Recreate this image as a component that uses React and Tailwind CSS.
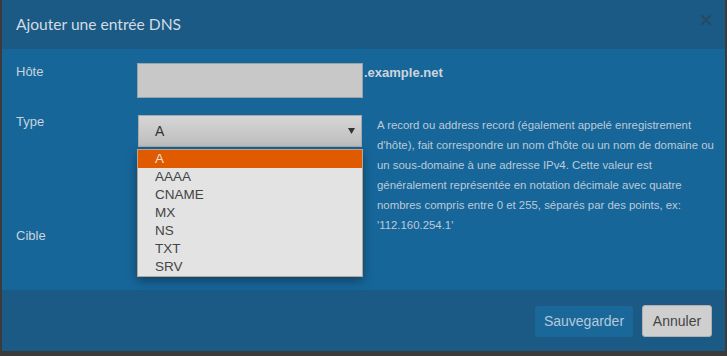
export default function App() {
  const items = ["A", "AAAA", "CNAME", "MX", "NS", "TXT", "SRV"];
  return (
    <div className="w-[727px] h-[356px] bg-[#3b3b3b] pl-[2px] overflow-hidden" style={{ fontFamily: '"Liberation Sans", Arial, sans-serif' }}>
      <div className="w-[723px] h-[351px] flex flex-col">
        {/* Header */}
        <div className="h-[49px] bg-[#1a5a84] flex items-center justify-between pl-[14px] pr-[14px] shrink-0">
          <div className="text-[15.6px] text-[#d2dae2] font-['Lato',sans-serif] pt-[1px]">Ajouter une entrée DNS</div>
          <svg width="10" height="10" viewBox="0 0 10 10" className="mb-[9px]">
            <path d="M1 1 L9 9 M9 1 L1 9" stroke="#2b4862" strokeWidth="2" strokeLinecap="round" />
          </svg>
        </div>
        {/* Body */}
        <div className="h-[241px] bg-[#17669a] relative pt-[14px] pl-[14px] shrink-0">
          {/* Row 1 */}
          <div className="flex items-start">
            <div className="w-[121px] text-[13px] leading-[18px] text-[#c9d3dc]">Hôte</div>
            <div className="w-[226px] h-[35px] bg-[#c8c8c8] border border-[#9aa3a8]" />
            <div className="text-[13px] leading-[18px] font-bold text-[#ccd5dd] ml-[1px] pt-[1px]">.example.net</div>
          </div>
          {/* Row 2 */}
          <div className="flex items-start mt-[17px] h-[104px]">
            <div className="w-[121px] text-[13px] leading-[18px] text-[#c9d3dc] -mt-[2px]">Type</div>
            <div className="w-[224px] h-[32px] ml-[1px] border border-[#a9a9a9] bg-gradient-to-b from-[#d6d6d6] to-[#bdbdbd] flex items-center justify-between pl-[16px] pr-[6px]">
              <span className="text-[14px] text-[#333]">A</span>
              <svg width="7" height="6" viewBox="0 0 7 6"><path d="M0 0 L7 0 L3.5 6 Z" fill="#333" /></svg>
            </div>
            <div className="ml-[15px] w-[340px] text-[11.4px] leading-[20px] text-[#bccad6]">
              A record ou address record (également appelé enregistrement d'hôte), fait correspondre un nom d'hôte ou un nom de domaine ou un sous-domaine à une adresse IPv4. Cette valeur est généralement représentée en notation décimale avec quatre nombres compris entre 0 et 255, séparés par des points, ex: '112.160.254.1'
            </div>
          </div>
          {/* Row 3 */}
          <div className="flex items-center h-[34px]">
            <div className="w-[121px] text-[13px] leading-[18px] text-[#c9d3dc]">Cible</div>
            <div className="w-[226px] h-[34px]" />
          </div>
          {/* Dropdown */}
          <div className="absolute left-[135px] top-[100px] w-[226px] bg-[#e3e3e3] border border-[#b9a592] shadow-[0_4px_10px_rgba(0,0,0,0.35)]">
            {items.map((it, i) => (
              <div
                key={it}
                className={
                  i === 0
                    ? "h-[18px] leading-[18px] pl-[17px] text-[13.5px] bg-[#e05a00] text-[#f6ddd0]"
                    : "h-[18px] leading-[18px] pl-[17px] text-[13.5px] text-[#444]"
                }
              >
                {it}
              </div>
            ))}
          </div>
        </div>
        {/* Footer */}
        <div className="h-[61px] bg-[#1a5a84] flex items-center justify-end pr-[13px] gap-[9px] shrink-0 pt-[1px]">
          <button className="w-[98px] h-[31px] bg-[#1a6899] rounded-[3px] text-[14px] text-[#b6c8d8]">Sauvegarder</button>
          <button className="w-[70px] h-[32px] bg-[#cfcfcf] border border-[#b0b0b0] rounded-[3px] text-[14px] text-[#444]">Annuler</button>
        </div>
      </div>
    </div>
  );
}
